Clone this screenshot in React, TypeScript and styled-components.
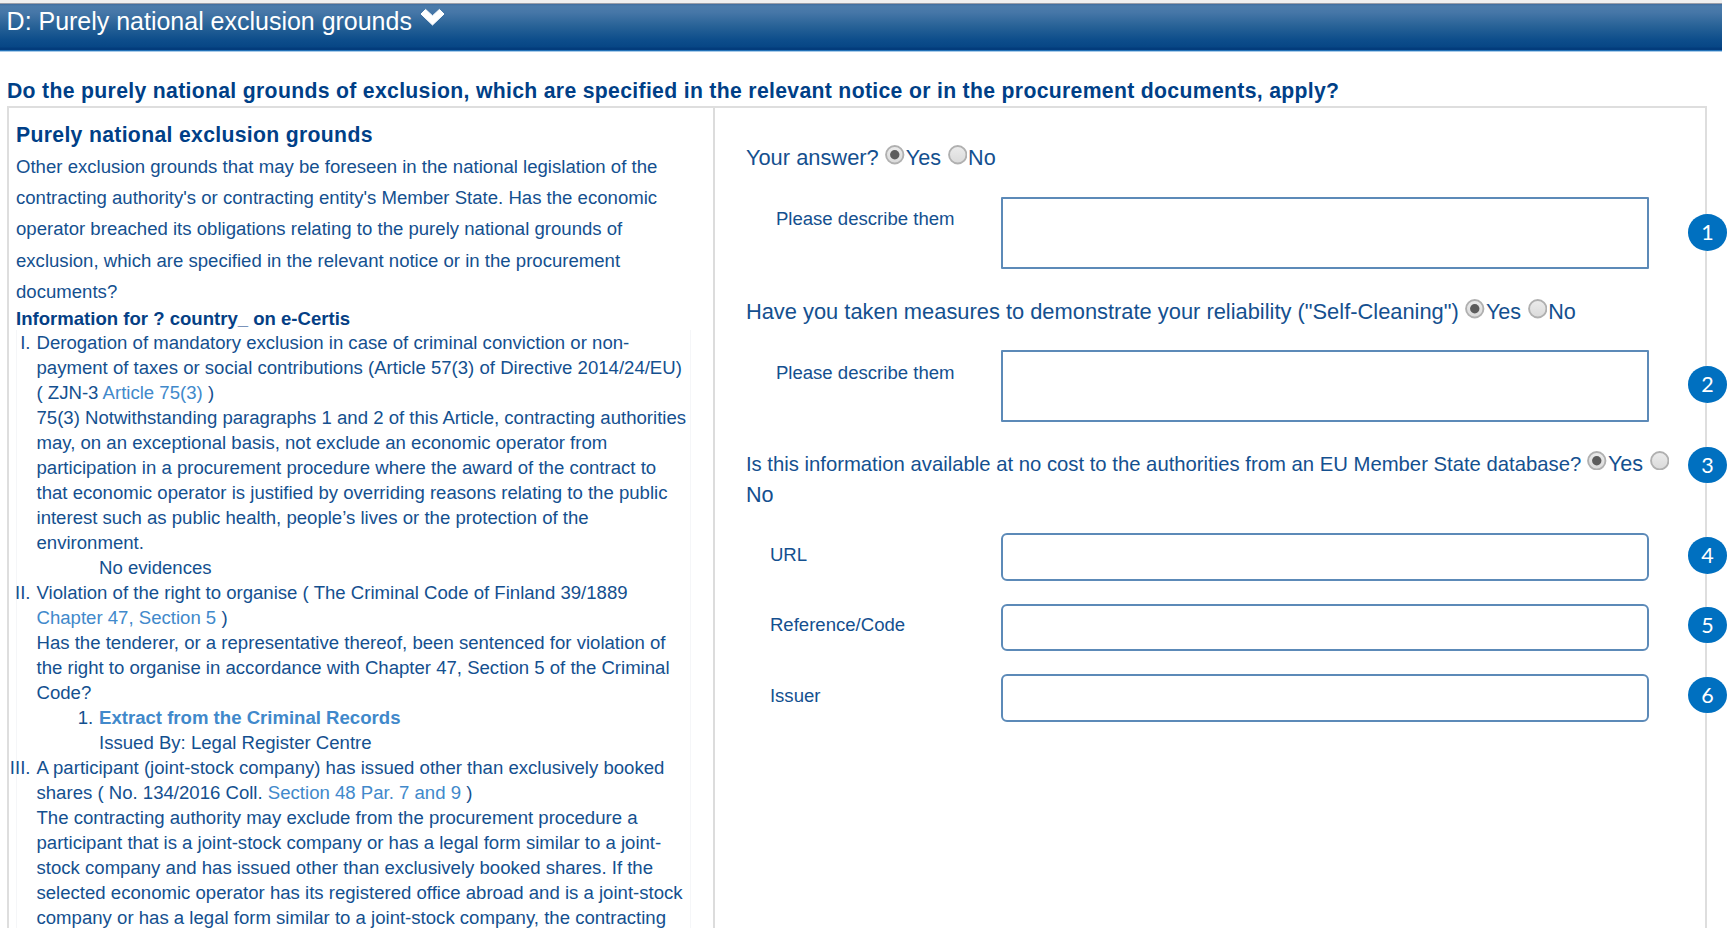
import React from 'react';
import styled, { createGlobalStyle } from 'styled-components';

const GlobalStyle = createGlobalStyle`
  *, *::before, *::after { box-sizing: border-box; }
  body {
    margin: 0;
    background: #fff;
    overflow: hidden;
    color: #14508f;
    font-family: 'Liberation Sans', Arial, sans-serif;
    font-size: 18.59px;
  }
  h1, h2, h3, p, ol { margin: 0; padding: 0; }
`;

const Page = styled.main`
  position: relative;
  width: 1730px;
  height: 928px;
  overflow: hidden;
  display: flex;
  flex-direction: column;
  background: #fff;
`;

const SectionBar = styled.header`
  flex: none;
  display: flex;
  align-items: flex-start;
  width: 1722px;
  height: 52px;
  padding: 2px 0 0 6.6px;
  background: linear-gradient(
    to bottom,
    #efefef 0, #efefef 3px,
    #a9a9ae 3px, #8a93a3 4px,
    #3f6c9d 4px, #4a7bab 6px,
    #4777a8 12px, #286297 26px, #0d4d8b 40px, #074685 47px,
    #033c7c 48px, #033c7c 50px,
    #1d6bb2 50px, #2a78bd 51px,
    #a8cbe9 51px
  );
`;

const SectionTitle = styled.h1`
  font-size: 24.98px;
  line-height: 38px;
  font-weight: 400;
  color: #fff;
  white-space: nowrap;
`;

const Chevron = styled.svg`
  width: 25px;
  height: 18px;
  margin: 6px 0 0 8.4px;
`;

const Question = styled.h2`
  flex: none;
  height: 54px;
  padding: 23px 0 0 7px;
  font-size: 21.2px;
  line-height: 32px;
  letter-spacing: 0.322px;
  color: #003f87;
  white-space: nowrap;
`;

const Panel = styled.section`
  flex: 1;
  display: grid;
  grid-template-columns: 706px 1fr;
  width: 1700px;
  margin-left: 7px;
  border: 2px solid #dedede;
  border-bottom: 0;
`;

const Criterion = styled.div`
  padding: 11px 0 0 7px;
  border-right: 2px solid #dcdcdc;
  white-space: nowrap;
`;

const CriterionTitle = styled.h3`
  font-size: 21.2px;
  line-height: 32px;
  letter-spacing: 0.322px;
  color: #003f87;
`;

const Description = styled.p`
  line-height: 31.2px;
`;

const CertisTitle = styled.h3`
  height: 23.2px;
  font-size: 18.57px;
  line-height: 23.6px;
  color: #053f85;
`;

const Grounds = styled.ol`
  width: 675px;
  list-style: none;
  line-height: 25px;
  border: solid #f5f6f8;
  border-width: 0 1px;
`;

const Ground = styled.li`
  position: relative;
  padding-left: 19.5px;
`;

const Marker = styled.span<{ $end: number }>`
  position: absolute;
  right: calc(100% - ${(p) => p.$end}px);
`;

const Evidence = styled.div`
  position: relative;
  padding-left: 62.5px;
`;

const Link = styled.a<{ $strong?: boolean }>`
  color: #4189cb;
  font-weight: ${(p) => (p.$strong ? 700 : 400)};
`;

const Answers = styled.div`
  display: flex;
  flex-direction: column;
  padding: 34px 0 0 30.9px;
`;

const Ask = styled.div<{ $gap?: number; $line?: number }>`
  margin-top: ${(p) => p.$gap ?? 0}px;
  font-size: 21.87px;
  line-height: ${(p) => p.$line ?? 31.2}px;
  white-space: nowrap;
`;

const Compact = styled.span`
  font-size: 20.3px;
  line-height: 1;
`;

const RadioDot = styled.svg`
  width: 19.5px;
  height: 19.5px;
  margin: 0 1.1px 0 0.4px;
  vertical-align: 0.5px;
`;

const Choice = styled.span`
  font-size: 21.6px;
  line-height: 1;
`;

const Field = styled.div<{ $gap: number; $indent: number }>`
  display: flex;
  align-items: flex-start;
  margin-top: ${(p) => p.$gap}px;
  padding-left: ${(p) => p.$indent}px;
`;

const Label = styled.label<{ $width: number; $top: number }>`
  width: ${(p) => p.$width}px;
  padding-top: ${(p) => p.$top}px;
  line-height: 26px;
`;

const TextArea = styled.textarea`
  width: 648.5px;
  height: 72px;
  border: 2px solid #5c8ab8;
  border-radius: 1px;
  resize: none;
  background: #fff;
  outline: 0;
`;

const TextInput = styled.input`
  width: 648.5px;
  height: 47.6px;
  border: 2px solid #5c8ab8;
  border-radius: 6px;
  background: #fff;
  outline: 0;
`;

const Badge = styled.span<{ $top: number }>`
  position: absolute;
  left: 1688px;
  top: ${(p) => p.$top}px;
  display: flex;
  align-items: center;
  justify-content: center;
  width: 39px;
  height: 36.5px;
  border-radius: 50%;
  background: #0070c0;
  color: #fff;
  font: 21.5px/36px Lato, sans-serif;
`;

function Radio({ id, checked }: { id: string; checked?: boolean }) {
  return (
    <RadioDot viewBox="0 0 19.5 19.5" role="radio" aria-checked={!!checked}>
      <defs>
        <linearGradient id={id} x1="0" y1="0" x2="0" y2="1">
          <stop offset="0" stopColor="#ececec" />
          <stop offset="1" stopColor="#dadada" />
        </linearGradient>
      </defs>
      <circle cx="9.75" cy="9.75" r="8.7" fill={`url(#${id})`} stroke="#b0b0b0" strokeWidth="1.9" />
      {checked && <circle cx="9.75" cy="9.75" r="4.7" fill="#5c5c5c" />}
    </RadioDot>
  );
}

const badges = [214, 366, 446.5, 537, 606.5, 676.5];

export default function App() {
  return (
    <Page>
      <GlobalStyle />
      <SectionBar>
        <SectionTitle>D: Purely national exclusion grounds</SectionTitle>
        <Chevron viewBox="0 0 25 18">
          <path d="M1 6 5.6 1.4 12.5 7.8 19.4 1.4 24 6 12.5 17Z" fill="#fff" stroke="#fff" strokeWidth="1" strokeLinejoin="round" />
        </Chevron>
      </SectionBar>
      <Question>
        Do the purely national grounds of exclusion, which are specified in the relevant notice or in the procurement documents, apply?
      </Question>
      <Panel>
        <Criterion>
          <CriterionTitle>Purely national exclusion grounds</CriterionTitle>
          <Description>
            Other exclusion grounds that may be foreseen in the national legislation of the<br />
            contracting authority's or contracting entity's Member State. Has the economic<br />
            operator breached its obligations relating to the purely national grounds of<br />
            exclusion, which are specified in the relevant notice or in the procurement<br />
            documents?
          </Description>
          <CertisTitle>Information for ? country_ on e-Certis</CertisTitle>
          <Grounds>
            <Ground>
              <Marker $end={13.5}>I.</Marker>
              Derogation of mandatory exclusion in case of criminal conviction or non-<br />
              payment of taxes or social contributions (Article 57(3) of Directive 2014/24/EU)<br />
              ( ZJN-3 <Link>Article 75(3)</Link> )<br />
              75(3) Notwithstanding paragraphs 1 and 2 of this Article, contracting authorities<br />
              may, on an exceptional basis, not exclude an economic operator from<br />
              participation in a procurement procedure where the award of the contract to<br />
              that economic operator is justified by overriding reasons relating to the public<br />
              interest such as public health, people’s lives or the protection of the<br />
              environment.
              <Evidence>No evidences</Evidence>
            </Ground>
            <Ground>
              <Marker $end={13.5}>II.</Marker>
              Violation of the right to organise ( The Criminal Code of Finland 39/1889<br />
              <Link>Chapter 47, Section 5</Link> )<br />
              Has the tenderer, or a representative thereof, been sentenced for violation of<br />
              the right to organise in accordance with Chapter 47, Section 5 of the Criminal<br />
              Code?
              <Evidence>
                <Marker $end={56.7}>1.</Marker>
                <Link $strong>Extract from the Criminal Records</Link><br />
                Issued By: Legal Register Centre
              </Evidence>
            </Ground>
            <Ground>
              <Marker $end={13.5}>III.</Marker>
              A participant (joint-stock company) has issued other than exclusively booked<br />
              shares ( No. 134/2016 Coll. <Link>Section 48 Par. 7 and 9</Link> )<br />
              The contracting authority may exclude from the procurement procedure a<br />
              participant that is a joint-stock company or has a legal form similar to a joint-<br />
              stock company and has issued other than exclusively booked shares. If the<br />
              selected economic operator has its registered office abroad and is a joint-stock<br />
              company or has a legal form similar to a joint-stock company, the contracting
            </Ground>
          </Grounds>
        </Criterion>
        <Answers>
          <Ask>
            Your answer? <Radio id="answer-yes" checked /><Choice>Yes</Choice> <Radio id="answer-no" /><Choice>No</Choice>
          </Ask>
          <Field $gap={23.8} $indent={30}>
            <Label $width={224.8} $top={9.4}>Please describe them</Label>
            <TextArea />
          </Field>
          <Ask $gap={27}>
            Have you taken measures to demonstrate your reliability ("Self-Cleaning") <Radio id="clean-yes" checked /><Choice>Yes</Choice> <Radio id="clean-no" /><Choice>No</Choice>
          </Ask>
          <Field $gap={23} $indent={30}>
            <Label $width={224.8} $top={9.4}>Please describe them</Label>
            <TextArea />
          </Field>
          <Ask $gap={26.5} $line={30.8}>
            <Compact>Is this information available at no cost to the authorities from an EU Member State database? </Compact>
            <Radio id="db-yes" checked /><Choice>Yes</Choice> <Radio id="db-no" /><br /><Choice>No</Choice>
          </Ask>
          <Field $gap={23} $indent={24}>
            <Label $width={230.8} $top={8.7}>URL</Label>
            <TextInput />
          </Field>
          <Field $gap={22.8} $indent={24}>
            <Label $width={230.8} $top={8.7}>Reference/Code</Label>
            <TextInput />
          </Field>
          <Field $gap={22.8} $indent={24}>
            <Label $width={230.8} $top={8.7}>Issuer</Label>
            <TextInput />
          </Field>
        </Answers>
      </Panel>
      {badges.map((top, i) => (
        <Badge key={top} $top={top}>{i + 1}</Badge>
      ))}
    </Page>
  );
}
